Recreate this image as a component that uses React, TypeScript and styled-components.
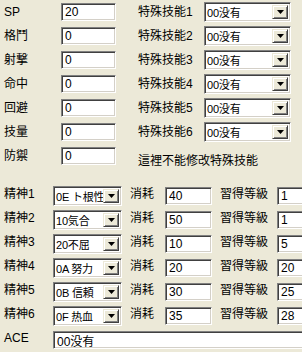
import React from "react";
import styled, { createGlobalStyle, css } from "styled-components";

const Global = createGlobalStyle`
  html, body { margin: 0; padding: 0; background: #ece9d8; }
  body {
    font-family: "Liberation Sans", "Noto Sans CJK JP", sans-serif;
    font-size: 12px;
    color: #000;
  }
`;

const Page = styled.div`
  width: 302px;
  height: 352px;
  overflow: hidden;
  background: #ece9d8;
  padding-left: 4px;
  box-sizing: border-box;
`;

const Top = styled.div`
  display: flex;
`;

const StatGrid = styled.div`
  display: grid;
  grid-template-columns: 57px 55px;
  grid-auto-rows: 24px;
  align-items: center;
`;

const SkillColumn = styled.div`
  margin-left: 22px;
  display: flex;
  flex-direction: column;
`;

const SkillGrid = styled.div`
  display: grid;
  grid-template-columns: 66px 87px;
  grid-auto-rows: 24px;
  align-items: center;
`;

const Note = styled.div`
  margin-top: 10px;
  line-height: 14px;
  font-size: 12px;
  white-space: nowrap;
`;

const Label = styled.span<{ $raise?: boolean; $pad?: number }>`
  font-size: 12px;
  line-height: 14px;
  white-space: nowrap;
  padding-left: ${(p) => (p.$pad ? p.$pad : 0)}px;
  margin-bottom: ${(p) => (p.$raise ? 5 : 0)}px;
`;

const sunken = css`
  box-sizing: border-box;
  background: #fff;
  border: 1px solid;
  border-color: #808080 #ffffff #ffffff #808080;
  box-shadow: inset 1px 1px 0 #404040, inset -1px -1px 0 #d4d0c8;
`;

const Field = styled.div<{ $w?: number }>`
  ${sunken};
  height: 18px;
  width: ${(p) => (p.$w ? `${p.$w}px` : "100%")};
  padding: 0 3px;
  display: flex;
  align-items: center;
  font-size: 12px;
  white-space: nowrap;
`;

const Combo = styled.div<{ $w: number }>`
  ${sunken};
  height: 20px;
  width: ${(p) => p.$w}px;
  display: flex;
  align-items: stretch;
  padding: 2px;
`;

const ComboValue = styled.span`
  flex: 1;
  min-width: 0;
  display: flex;
  align-items: center;
  font-size: 11px;
  letter-spacing: -0.2px;
  white-space: nowrap;
`;

const ComboButton = styled.span`
  width: 16px;
  flex: none;
  box-sizing: border-box;
  background: #ece9d8;
  border: 1px solid;
  border-color: #ece9d8 #404040 #404040 #ece9d8;
  box-shadow: inset 1px 1px 0 #ffffff, inset -1px -1px 0 #808080;
  display: flex;
  align-items: center;
  justify-content: center;
`;

const SpiritGrid = styled.div`
  margin-top: 16px;
  display: grid;
  grid-template-columns: 49px 69px 43px 47px 65px 60px;
  grid-auto-rows: 24px;
  align-items: center;
`;

const AceField = styled(Field)`
  grid-column: 2 / -1;
  width: 260px;
`;

const Arrow = () => (
  <svg width="7" height="4" viewBox="0 0 7 4">
    <polygon points="0,0 7,0 3.5,4" fill="#000" />
  </svg>
);

const Dropdown = ({ value, w }: { value: string; w: number }) => (
  <Combo $w={w}>
    <ComboValue>{value}</ComboValue>
    <ComboButton>
      <Arrow />
    </ComboButton>
  </Combo>
);

const stats = [
  ["SP", "20"],
  ["格鬥", "0"],
  ["射撃", "0"],
  ["命中", "0"],
  ["回避", "0"],
  ["技量", "0"],
  ["防禦", "0"],
];

const spirits = [
  ["0E ト根性", "40", "1"],
  ["10気合", "50", "1"],
  ["20不屈", "10", "5"],
  ["0A 努力", "20", "20"],
  ["0B 信頼", "30", "25"],
  ["0F 热血", "35", "28"],
];

export default function App() {
  return (
    <Page>
      <Global />
      <Top>
        <StatGrid>
          {stats.map(([l, v]) => (
            <React.Fragment key={l}>
              <Label>{l}</Label>
              <Field>{v}</Field>
            </React.Fragment>
          ))}
        </StatGrid>
        <SkillColumn>
          <SkillGrid>
            {[1, 2, 3, 4, 5, 6].map((n) => (
              <React.Fragment key={n}>
                <Label>特殊技能{n}</Label>
                <Dropdown value="00没有" w={87} />
              </React.Fragment>
            ))}
          </SkillGrid>
          <Note>這裡不能修改特殊技能</Note>
        </SkillColumn>
      </Top>
      <SpiritGrid>
        {spirits.map(([s, cost, lv], i) => (
          <React.Fragment key={i}>
            <Label $raise>精神{i + 1}</Label>
            <Dropdown value={s} w={69} />
            <Label $raise $pad={8}>消耗</Label>
            <Field $w={47}>{cost}</Field>
            <Label $raise $pad={8}>習得等級</Label>
            <Field $w={40}>{lv}</Field>
          </React.Fragment>
        ))}
        <Label $raise>ACE</Label>
        <AceField>00没有</AceField>
      </SpiritGrid>
    </Page>
  );
}
